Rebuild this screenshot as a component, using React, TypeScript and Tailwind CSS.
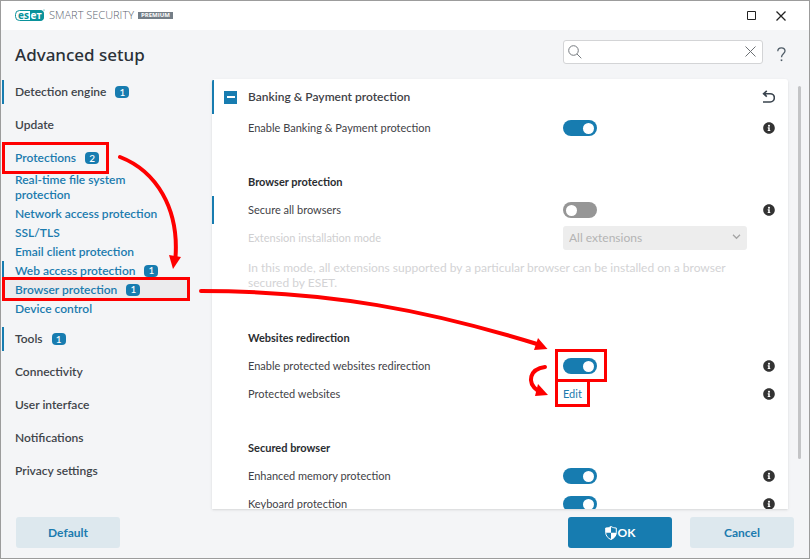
import { useState } from "react";
import { FaInfoCircle } from "react-icons/fa";

type NavItem = {
  label: string;
  badge?: number;
  changed?: boolean;
  active?: boolean;
};

const navTop: NavItem[] = [
  { label: "Detection engine", badge: 1, changed: true },
  { label: "Update" },
  { label: "Protections", badge: 2, active: true },
];

const navProtections: NavItem[] = [
  { label: "Real-time file system protection" },
  { label: "Network access protection" },
  { label: "SSL/TLS" },
  { label: "Email client protection" },
  { label: "Web access protection", badge: 1, changed: true },
  { label: "Browser protection", badge: 1, changed: true, active: true },
  { label: "Device control" },
];

const navBottom: NavItem[] = [
  { label: "Tools", badge: 1, changed: true },
  { label: "Connectivity" },
  { label: "User interface" },
  { label: "Notifications" },
  { label: "Privacy settings" },
];

const Logo = () => {
  return (
    <svg
      width="30"
      height="13"
      viewBox="0 0 30 13"
      className="font-['Open_Sans',sans-serif]"
      aria-label="ESET"
    >
      <rect x="0.5" y="1.5" width="28" height="10" rx="4" fill="#fff" stroke="#0a929b" />
      <path d="M15 1h10a4 4 0 0 1 4 4v3a4 4 0 0 1-4 4H15z" fill="#0a929b" />
      <text x="3" y="9.5" fontSize="10" fontWeight="700" fill="#0a929b">
        es
      </text>
      <text x="15.500" y="9.5" fontSize="10" fontWeight="700" fill="#fff">
        e
      </text>
      <text x="21.500" y="9.5" fontSize="9" fontWeight="700" fill="#fff">
        T
      </text>
      <circle cx="29" cy="1" r="0.6" fill="#0a929b" />
    </svg>
  );
};

const TitleBar = () => {
  return (
    <header className="flex h-[29px] shrink-0 items-center bg-white pr-[23px] pl-[14px]">
      <Logo />
      <span className="ml-1 font-['Open_Sans',sans-serif] text-[11px] font-light text-[#5c6670]">
        SMART SECURITY
      </span>
      <span className="ml-1 flex h-[7px] items-center bg-[#747e87] px-[3px] font-['Open_Sans',sans-serif] text-[6px] font-bold text-white">
        PREMIUM
      </span>
      <div className="ml-auto flex gap-5">
        <button aria-label="Maximize">
          <svg width="9" height="9" viewBox="0 0 9 9" fill="none" stroke="#222">
            <path d="M.5 .5h8v8h-8z" />
          </svg>
        </button>
        <button aria-label="Close">
          <svg width="10" height="10" viewBox="0 0 10 10" fill="none" stroke="#222" strokeWidth="1.3">
            <path d="M.5 .5l9 9M9.5 .5l-9 9" />
          </svg>
        </button>
      </div>
    </header>
  );
};

const Toolbar = () => {
  return (
    <div className="flex h-[49px] shrink-0 items-center pr-[23px] pl-[14px]">
      <h1 className="font-['Noto_Sans',sans-serif] text-[17px] font-medium text-[#2b3138]">
        Advanced setup
      </h1>
      <div className="mb-[6px] ml-auto flex h-6 w-[200px] items-center rounded-[3px] border border-[#d3d4d6] bg-white px-1">
        <svg width="14" height="14" viewBox="0 0 14 14" fill="none" stroke="#74797e">
          <circle cx="5.5" cy="5.5" r="4.8" />
          <path d="M9 9l4.3 4.3" />
        </svg>
        <input
          type="text"
          aria-label="Search"
          className="min-w-0 flex-1 px-1 text-[12px] outline-none"
        />
        <button aria-label="Clear search" className="mr-[2px]">
          <svg width="11" height="11" viewBox="0 0 11 11" fill="none" stroke="#6d7175">
            <path d="M.5 .5l10 10M10.500 .5l-10 10" />
          </svg>
        </button>
      </div>
      <button aria-label="Help" className="ml-[14px]">
        <svg width="9" height="15" viewBox="0 0 9 15" fill="none" stroke="#4f5c67" strokeWidth="1.3">
          <path d="M.8 4.200C.8 2 2.300 .8 4.400 .8S8 2 8 4c0 2.700-3.500 3-3.500 6.200" />
          <path d="M4.500 12.400v1.700" strokeWidth="1.600" />
        </svg>
      </button>
    </div>
  );
};

const Badge = ({ value }: { value: number }) => {
  return (
    <span className="flex h-3 w-[14px] shrink-0 items-center justify-center rounded-[4px] bg-[#177cb0] text-[10px] font-medium text-white">
      {value}
    </span>
  );
};

const NavLink = ({ item }: { item: NavItem }) => {
  return (
    <li>
      <a
        href="#"
        className={`flex h-6 items-center gap-[9px] border-l-2 pl-[11px] ${
          item.changed ? "border-[#177cb0]" : "border-transparent"
        } ${item.active ? "text-[#1b7bae]" : "text-[#40444a]"}`}
      >
        {item.label}
        {item.badge && <Badge value={item.badge} />}
      </a>
    </li>
  );
};

const SubNavLink = ({ item }: { item: NavItem }) => {
  return (
    <li>
      <a
        href="#"
        className={`flex items-center gap-[9px] border-l-2 py-[2px] pl-[11px] leading-[15px] text-[#1b7bae] ${
          item.changed ? "border-[#177cb0]" : "border-transparent"
        } ${item.active ? "bg-[#ebebed]" : ""}`}
      >
        <span className="max-w-[160px]">{item.label}</span>
        {item.badge && <Badge value={item.badge} />}
      </a>
    </li>
  );
};

const Sidebar = () => {
  return (
    <nav className="w-[187px] shrink-0 pl-px text-[12px] font-semibold">
      <ul className="flex flex-col gap-[9px] pt-px">
        {navTop.map((item) => (
          <NavLink key={item.label} item={item} />
        ))}
      </ul>
      <ul className="pb-[9px]">
        {navProtections.map((item) => (
          <SubNavLink key={item.label} item={item} />
        ))}
      </ul>
      <ul className="flex flex-col gap-[9px]">
        {navBottom.map((item) => (
          <NavLink key={item.label} item={item} />
        ))}
      </ul>
    </nav>
  );
};

const InfoButton = () => {
  return (
    <button aria-label="More information" className="ml-auto text-[#333]">
      <FaInfoCircle size={12} />
    </button>
  );
};

const SwitchRow = ({
  id,
  label,
  defaultOn = true,
  changed = false,
}: {
  id: string;
  label: string;
  defaultOn?: boolean;
  changed?: boolean;
}) => {
  const [on, setOn] = useState<boolean>(defaultOn);

  return (
    <div
      className={`flex h-7 items-center border-l-2 pr-[13px] pl-[34px] ${
        changed ? "border-[#177cb0]" : "border-transparent"
      }`}
    >
      <label htmlFor={id} className="w-[315px] shrink-0">
        {label}
      </label>
      <input
        id={id}
        type="checkbox"
        role="switch"
        checked={on}
        onChange={() => setOn(!on)}
        className="flex h-4 w-[34px] appearance-none items-center rounded-full bg-[#969696] px-[3px] before:h-[11px] before:w-[11px] before:rounded-full before:bg-white checked:justify-end checked:bg-[#177cb0]"
      />
      <InfoButton />
    </div>
  );
};

const SectionTitle = ({ children }: { children: string }) => {
  return (
    <h3 className="mt-[26px] flex h-7 items-center pl-9 font-bold text-[#2a2d31]">
      {children}
    </h3>
  );
};

const SettingsPanel = () => {
  return (
    <main className="min-w-0 flex-1 overflow-hidden rounded-t-[3px] bg-white text-[11px] text-[#3f4247] shadow-sm">
      <div className="pt-px">
        <div className="flex h-[34px] items-center border-l-2 border-[#177cb0] pr-[13px] pl-[10px]">
          <button
            aria-label="Collapse section"
            className="flex h-[13px] w-[13px] items-center justify-center bg-[#177cb0]"
          >
            <span className="h-[2px] w-2 bg-white" />
          </button>
          <h2 className="ml-[11px] text-[12px] font-semibold">
            Banking &amp; Payment protection
          </h2>
          <button aria-label="Revert changes" className="ml-auto">
            <svg width="13" height="14" viewBox="0 0 13 14" fill="none" stroke="#3a444e" strokeWidth="1.600">
              <path d="M4.800 .8L1.600 3.700l3.200 3M1.800 3.700h6.400a3.900 3.900 0 0 1 0 8.300H1" />
            </svg>
          </button>
        </div>
        <SwitchRow id="banking" label="Enable Banking & Payment protection" />

        <SectionTitle>Browser protection</SectionTitle>
        <SwitchRow
          id="secure-all"
          label="Secure all browsers"
          defaultOn={false}
          changed
        />
        <div className="flex h-7 items-center pl-9 text-[#cfcfd1]">
          <label htmlFor="extension-mode" className="w-[315px] shrink-0">
            Extension installation mode
          </label>
          <div className="relative w-[184px]">
            <select
              id="extension-mode"
              disabled
              className="block h-6 w-full appearance-none rounded-[3px] bg-[#ededed] pl-[6px] text-[12px] text-[#b4b4b4] opacity-100"
            >
              <option>All extensions</option>
            </select>
            <svg
              className="absolute top-2 right-[6px]"
              width="9"
              height="6"
              viewBox="0 0 9 6"
              fill="none"
              stroke="#a5a5a5"
              strokeWidth="1.300"
            >
              <path d="M1 .8l3.500 3.500L8 .8" />
            </svg>
          </div>
        </div>
        <p className="max-w-[540px] py-2 pl-9 text-[12px] leading-[15px] text-[#d3d3d5]">
          In this mode, all extensions supported by a particular browser can be
          installed on a browser secured by ESET.
        </p>

        <SectionTitle>Websites redirection</SectionTitle>
        <SwitchRow
          id="redirection"
          label="Enable protected websites redirection"
        />
        <div className="flex h-7 items-center pr-[13px] pl-9">
          <span className="w-[315px] shrink-0">Protected websites</span>
          <a href="#" className="text-[#1b7bae]">
            Edit
          </a>
          <InfoButton />
        </div>

        <SectionTitle>Secured browser</SectionTitle>
        <SwitchRow id="memory" label="Enhanced memory protection" />
        <SwitchRow id="keyboard" label="Keyboard protection" />
      </div>
    </main>
  );
};

const Footer = () => {
  return (
    <footer className="flex h-[49px] shrink-0 items-start pt-2 pr-[15px] pl-[15px] text-[12px] font-bold">
      <button className="h-[31px] w-[104px] rounded-[3px] bg-[#dde8ee] text-[#1b7bae]">
        Default
      </button>
      <button className="ml-auto flex h-[31px] w-[104px] items-center justify-center gap-px rounded-[3px] bg-[#177cb0] text-white">
        <svg width="12" height="14" viewBox="0 0 12 14">
          <path
            d="M6 .5C4.500 1.500 2.500 2 .7 2v4.500C.7 9.800 3 12.300 6 13.500c3-1.200 5.300-3.700 5.300-7V2C9.500 2 7.500 1.500 6 .5z"
            fill="#177cb0"
            stroke="#fff"
          />
          <path d="M6 .5C4.500 1.500 2.500 2 .7 2v4.700H6zM6 6.700h5.300c0 3.300-2.300 5.600-5.300 6.800z" fill="#fff" />
        </svg>
        OK
      </button>
      <button className="ml-[18px] h-[31px] w-[104px] rounded-[3px] bg-[#dde8ee] text-[#1b7bae]">
        Cancel
      </button>
    </footer>
  );
};

// Walkthrough marks drawn over the window
const Annotations = () => {
  return (
    <svg
      className="pointer-events-none absolute -top-px -left-px"
      width="810"
      height="559"
      viewBox="0 0 810 559"
      fill="none"
      stroke="#fe0000"
      aria-hidden="true"
    >
      <g strokeWidth="3">
        <rect x="3.500" y="143.500" width="104" height="29" />
        <rect x="3.500" y="278.500" width="185" height="21" />
        <rect x="556.500" y="350.500" width="49" height="30" />
        <rect x="556.500" y="380.500" width="32" height="25" />
      </g>
      <g strokeWidth="4" strokeLinecap="round">
        <path d="M120 157C156 171 179 208 175.500 257" />
        <path d="M201 291C330 291 430 311 537 344" />
        <path d="M545 367C530 369 526 382 538 391" />
      </g>
      <g fill="#fe0000" stroke="none">
        <path d="M169 255l12 2-8 12z" />
        <path d="M538 338l9.500 11-13.500 1z" />
        <path d="M538 384l10 11-13 1z" />
      </g>
    </svg>
  );
};

export default function App() {
  return (
    <div className="relative flex h-screen flex-col overflow-hidden border border-[#9c9c9c] bg-[#f4f5f7] font-[Lato,sans-serif]">
      <TitleBar />
      <Toolbar />
      <div className="flex min-h-0 flex-1">
        <Sidebar />
        <div className="flex min-w-0 flex-1 pr-2 pl-6">
          <SettingsPanel />
          <div className="mt-[7px] mb-[50px] ml-[10px] w-[3px] rounded-full bg-[#c3c4c6]" />
        </div>
      </div>
      <Footer />
      <Annotations />
    </div>
  );
}
